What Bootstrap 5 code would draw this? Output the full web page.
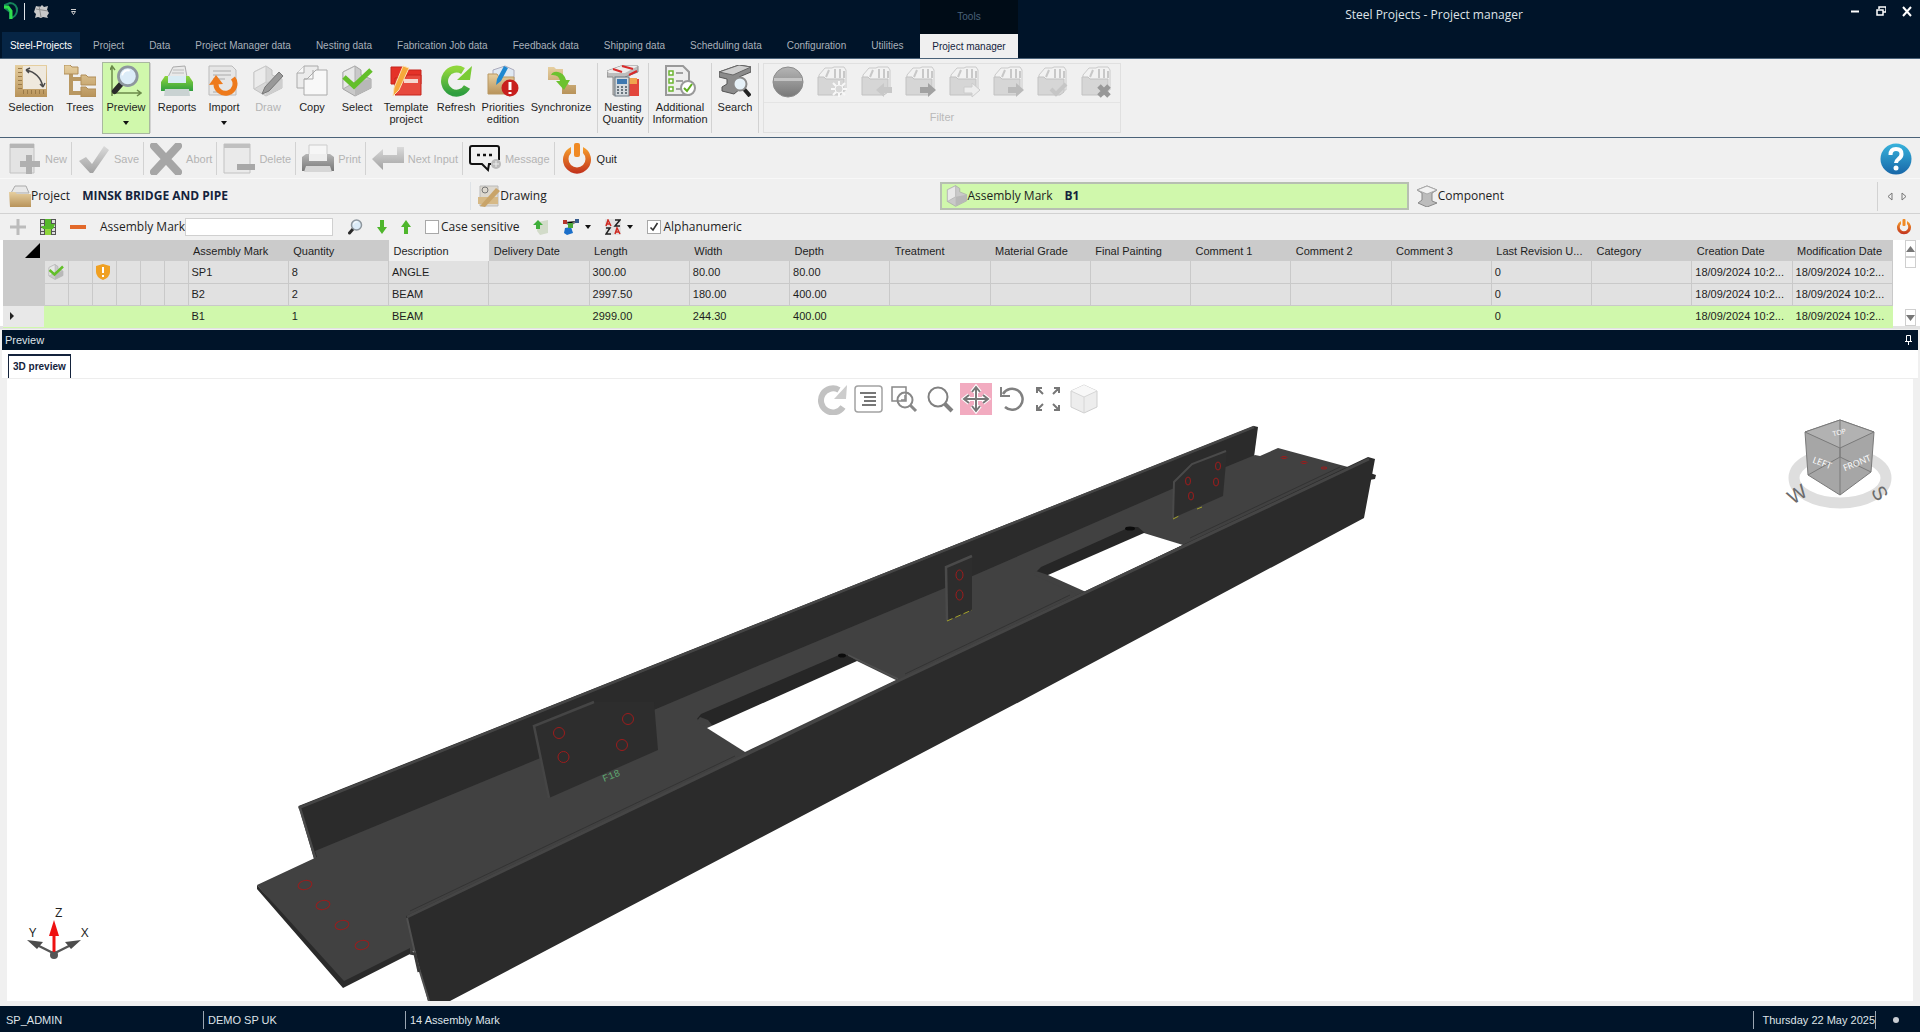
<!DOCTYPE html>
<html lang="en">
<head>
<meta charset="utf-8">
<meta name="viewport" content="width=device-width, initial-scale=1">
<title>Steel Projects - Project manager</title>
<link href="https://cdn.jsdelivr.net/npm/bootstrap@5.3.0/dist/css/bootstrap.min.css" rel="stylesheet">
<style>
:root{--navy:#001429;--panel:#f0f0f0;--green:#d0f8ac;--rule:#d2d2d2}
body{font-family:"Liberation Sans",Arial,sans-serif;font-size:11px;line-height:12px;color:#1e1e1e;background:var(--panel)}
button{font:inherit;color:inherit;background:none;border:0;padding:0}
svg{display:block;flex:none}
a{color:inherit;text-decoration:none}
.humanist{font-family:"Open Sans","Noto Sans",sans-serif;font-size:12px;line-height:16px}
.shell{min-height:100vh}
.i32{width:32px;height:32px}.i22{width:22px;height:22px}.i16{width:16px;height:16px}

.titlebar{background:var(--navy);color:#dfe3e8;height:59px;border-bottom:1px solid #4a6278}
.quick{width:920px;height:32px}
.tabset{height:26px;padding-left:2px;font-size:10px}
.tabset a{padding:0 12px;height:26px;line-height:28px;color:#a9b1ba;margin-right:1px;white-space:nowrap}
.tabset a.first-tab{background:#062545;color:#fff;padding:0;width:78px;text-align:center}
.context-group{background:#000c17;width:98px;height:58px;color:#4a627a;font-size:10px}
.context-group span{height:34px;line-height:34px}
.context-group a{background:var(--panel);color:#14233c;height:24px;line-height:26px}
.win-title{padding-top:7px}

.ribbon{height:79px;padding:4px 5px;border-bottom:1px solid #4a6278}
.ribbon button{height:70px;padding-top:2px;display:flex;flex-direction:column;align-items:center}
.ribbon button span{margin-top:4px}
.ribbon button svg.caret{margin-top:8px}
.w44{width:44px}.w46{width:46px}.w48{width:48px}.w50{width:50px}.w52{width:52px}.w60{width:60px}.w70{width:70px}
.ribbon button.active{background:var(--green);outline:1px solid #a9b8a0}
.vbar{width:1px;background:var(--rule);margin:0 1px}
.filter-group{width:358px;border:1px solid #e0e0e0;margin-left:3px;color:#b9b9b9}
.filter-group .fi{height:39px;border-bottom:1px solid #e4e4e4;padding:2px 8px}
button:disabled{color:#b4b4b4}

.tools{height:41px;padding:4px 8px 3px 3px;border-bottom:1px solid #f8f8f8}
.tools button{height:33px;padding:0 4px 0 6px;display:flex;align-items:center;gap:4px}
.tools button+button{border-left:1px solid var(--rule)}

.crumbs{height:35px;padding:3px 0 2px 2px;border-bottom:1px solid var(--rule)}
.crumb{flex:1 1 0;padding-left:7px;height:28px}
.crumb.active{background:var(--green);border:2px solid #b7bfb2;padding-left:4px}
.crumb strong{color:#14233c;margin-left:12px}
.crumb-nav{width:43px;padding-right:4px;border-left:1px solid var(--rule)}

.finder{height:26px;padding:0 8px 0 10px;gap:14px}
.finder input[type=text]{width:148px;height:18px;border:1px solid #d0d0d0;padding:0 3px}
.finder input[type=checkbox]{appearance:none;width:14px;height:14px;margin:0 2px 0 0;border:1px solid #a8a8a8;background:#fff}
.finder input[type=checkbox]:checked{background:#fff url("data:image/svg+xml,%3Csvg xmlns='http://www.w3.org/2000/svg' viewBox='0 0 12 12'%3E%3Cpath d='M2.500 6.500L5 9l4.500-7' fill='none' stroke='%23333' stroke-width='1.600'/%3E%3C/svg%3E")}
.finder label{display:flex;align-items:center}
.with-caret{display:flex;align-items:center;gap:6px}

.gridwrap{padding-left:3px;background:#fff;border-bottom:3px solid #e2e2e2;height:89px}
.grid-table{table-layout:fixed;width:100%;border-collapse:collapse}
.grid-table th{background:#cbcbcb;font-weight:400;height:21px;padding:0 0 0 5px;white-space:nowrap}
.grid-table th.lit{background:#f0f0f0}
.grid-table td{background:#e1e1e1;border-right:1px solid #c9c9c9;border-bottom:1px solid #c9c9c9;height:22px;padding:0 0 0 3px;white-space:nowrap}
.grid-table td.gutter{background:#cbcbcb;border-color:#cbcbcb}
.grid-table tr.picked td{background:var(--green);border-color:var(--green)}
.grid-table tr.picked td.gutter{background:#e8e8e8}
.c-gut{width:41px}.c-ico{width:24px}
.vscroll{width:17px;margin:0 4px 0 12px}
.vscroll button,.vscroll i{border:1px solid #cfcfcf;height:17px;display:flex;align-items:center;justify-content:center;background:#fff}
.vscroll i{height:11px}

.pane-title{background:var(--navy);color:#dfe3e8;height:20px;margin:1px 2px 0;padding:0 6px 0 3px}
.pane-tabs{height:29px;background:#fff;margin:0 2px;padding:4px 6px 0;border-bottom:1px solid #ededed}
.pane-tabs a{border:1px solid #14233c;border-bottom:0;border-top-width:2px;color:#14233c;font-weight:700;font-size:10px;line-height:22px;padding:0 4px}
.stage{background:#fff;margin:0 7px 5px;flex:1 1 auto;position:relative;overflow:hidden}
.scene{position:absolute;inset:0;width:100%;height:100%}
.viewbar{position:relative;padding:4px 4px 0 0;gap:4px}
.viewbar button.active{background:#f2abc0}
.status{background:var(--navy);color:#dfe3e8;height:26px;padding:2px 0 0 2px}
.status span{border-right:1px solid #9aa6b2;height:18px;line-height:18px;padding:0 4px}
.status .cell{width:202px}
</style>
</head>
<body>
<svg width="0" height="0" class="position-absolute" aria-hidden="true">
<defs>
<linearGradient id="gT" x2="0" y2="1"><stop offset="0" stop-color="#e6cfa0"/><stop offset="1" stop-color="#b8935a"/></linearGradient>
<linearGradient id="gG" x2="0" y2="1"><stop offset="0" stop-color="#8fd63c"/><stop offset="1" stop-color="#2f9e3f"/></linearGradient>
<linearGradient id="gO" x2="0" y2="1"><stop offset="0" stop-color="#f7a02c"/><stop offset="1" stop-color="#c1301c"/></linearGradient>
<linearGradient id="gS" x2="0" y2="1"><stop offset="0" stop-color="#dadada"/><stop offset="1" stop-color="#a2a2a2"/></linearGradient>
<linearGradient id="gD" x2="0" y2="1"><stop offset="0" stop-color="#b5b5b5"/><stop offset="1" stop-color="#787878"/></linearGradient>
<linearGradient id="gB" x2="0" y2="1"><stop offset="0" stop-color="#38b3dc"/><stop offset="1" stop-color="#1867a8"/></linearGradient>
<symbol id="power" viewBox="0 0 32 32"><path d="M10 4A14 14 0 1 0 22 4V10a8.500 8.500 0 1 1-12 0z" fill="url(#gO)"/><rect x="13" y="0" width="6" height="14" rx="2" fill="#f08a24"/></symbol>
<symbol id="caret" viewBox="0 0 6 4"><path d="M0 0h6L3 4z" fill="#111"/></symbol>
<symbol id="lens" viewBox="0 0 32 32"><path d="M12 20L5 28" stroke="#2a2a2a" stroke-width="6" stroke-linecap="round"/><circle cx="19" cy="12" r="10" fill="#dcecf8" stroke="#8e979e" stroke-width="3"/><path d="M13 11a6 6 0 0 1 8-5" fill="none" stroke="#fff" stroke-width="2"/></symbol>
<symbol id="files" viewBox="0 0 32 32"><path d="M3 9l6-7h7l2-1h10l2 3v20H9L3 26z" fill="#f2f2f2" stroke="#cacaca"/><path d="M13 4l-3 7M19 3v9M24 3v9M28 5v7" stroke="#c8c8c8" stroke-width="2"/><path d="M2 11h6l2 2h18v13l-4 3H2z" fill="#d6d6d6" stroke="#c2c2c2"/></symbol>
<symbol id="block" viewBox="0 0 32 32"><path d="M2 7L14 1l6 4v5l10 4v9L14 31 2 24z" fill="#c9c9c9" stroke="#a4a4a4"/><path d="M14 1v16L2 24V7z" fill="#e8e8e8" stroke="#b0b0b0"/><path d="M14 17l16-3v9L14 31z" fill="#b8b8b8"/></symbol>
</defs>
</svg>

<div class="shell d-flex flex-column">
<header class="titlebar d-flex align-items-start">
  <div class="d-flex flex-column">
    <div class="quick d-flex align-items-start">
      <svg width="80" height="26" viewBox="0 0 80 26"><path d="M5 8V5l5-2a7 7 0 0 1 7 8 8 8 0 0 1-7 7V12z" fill="none" stroke="#14835a" stroke-width="2"/><path d="M4 7h4l3 4v8" fill="none" stroke="#2fe04c" stroke-width="3"/><path d="M24.500 3v17" stroke="#dfe3e8"/><path d="M36 6l4 1 2-2 2 2 4-1-1 4 2 3-2 3 1 2-5-1-2 1-3-1-3 1 1-4-2-2 1-3z" fill="#c9c9c9"/><path d="M36 9l12 2M39 6l2 11" stroke="#8c8c8c"/><path d="M71 9.500h5" stroke="#ccc"/><path d="M71.500 11.500h4l-2 3z" fill="none" stroke="#ccc"/></svg>
    </div>
    <nav class="tabset d-flex" aria-label="Ribbon">
      <a class="first-tab" href="#">Steel-Projects</a><a href="#">Project</a><a href="#">Data</a><a href="#">Project Manager data</a><a href="#">Nesting data</a><a href="#">Fabrication Job data</a><a href="#">Feedback data</a><a href="#">Shipping data</a><a href="#">Scheduling data</a><a href="#">Configuration</a><a href="#">Utilities</a>
    </nav>
  </div>
  <div class="context-group d-flex flex-column text-center"><span>Tools</span><a href="#">Project manager</a></div>
  <div class="win-title humanist flex-fill text-center">Steel Projects - Project manager</div>
  <div class="d-flex gap-3 pt-1 pe-2">
    <button aria-label="Minimize"><svg width="10" height="14"><path d="M1 7.500h8" stroke="#fff" stroke-width="2"/></svg></button>
    <button aria-label="Restore"><svg width="10" height="14"><path d="M3 5V3h7v5H7.500M1 6h6v5H1z" fill="none" stroke="#fff" stroke-width="1.500"/></svg></button>
    <button aria-label="Close"><svg width="10" height="14"><path d="M1 3l8 9M9 3l-8 9" stroke="#fff" stroke-width="2"/></svg></button>
  </div>
</header>

<section class="ribbon d-flex" aria-label="Project manager commands">
  <button class="w52"><svg class="i32" viewBox="0 0 32 32"><path d="M0 0h32v32H0z" fill="url(#gT)"/><path d="M8 1h23v23H8z" fill="#efe9de"/><path d="M5 24V1M8 27h23" stroke="#9a7a48" stroke-dasharray="1 3" stroke-width="4"/><path d="M11 5q14 3 17 17M11 5l4-2M11 5l3 3M28 22l-3-3M28 22l2-4" fill="none" stroke="#4a4a4a" stroke-width="1.500"/></svg><span>Selection</span></button>
  <button class="w46"><svg class="i32" viewBox="0 0 32 32"><path d="M7 6v22h10M7 14h10" fill="none" stroke="#b99862" stroke-width="4"/><path d="M0 0h6l2 2h6v7H0zM17 10h5l2 2h8v8H17zM17 22h5l2 2h8v8H17z" fill="url(#gT)" stroke="#b08d58"/></svg><span>Trees</span></button>
  <button class="w46 active"><svg class="i32" viewBox="0 0 32 32"><path d="M2 31V2M0 5l2-4 3 4M2 28h28M27 25l4 3-4 3" fill="none" stroke="#6b8a4a" stroke-width="1.500"/><use href="#lens" width="30" height="30"/></svg><span>Preview</span><svg class="caret" width="6" height="4"><use href="#caret"/></svg></button>
  <div class="vbar"></div>
  <button class="w50"><svg class="i32" viewBox="0 0 32 32"><path d="M7 12L12 2l12-1 2 11z" fill="#e9e9e9" stroke="#aaa"/><path d="M12 5h11M11 8h12" stroke="#bbb"/><path d="M4 11h24l4 6v9H0v-9z" fill="url(#gG)"/><path d="M7 11h18v7H7z" fill="#d9ecf4"/><path d="M4 24h24l1 7H3z" fill="#c9d2d2"/></svg><span>Reports</span></button>
  <button class="w44"><svg class="i32" viewBox="0 0 32 32"><path d="M1 1h23l4 4v25H1z" fill="#e6e6e6" stroke="#bbb"/><path d="M5 6h18M5 10h18M5 14h12M5 27h18" stroke="#aaa"/><path d="M8 18a9.500 9.500 0 1 0 17-5" fill="none" stroke="#ee7a1c" stroke-width="5"/><path d="M1 20L8 10l7 9z" fill="#ee7a1c"/></svg><span>Import</span><svg class="caret" width="6" height="4"><use href="#caret"/></svg></button>
  <button class="w44" disabled><svg class="i32" viewBox="0 0 32 32"><use href="#block" opacity=".6"/><path d="M10 29l3-7L27 7l4 4-14 15z" fill="#999" stroke="#777"/></svg><span>Draw</span></button>
  <button class="w44"><svg class="i32" viewBox="0 0 32 32"><path d="M8 1h14v22H1V8z" fill="#ececec" stroke="#aaa"/><path d="M8 1v7H1M20 5h11v25H8V14h3z" fill="#f8f8f8" stroke="#aaa"/><path d="M17 5v9H8" fill="none" stroke="#aaa"/></svg><span>Copy</span></button>
  <button class="w46"><svg class="i32" viewBox="0 0 32 32"><use href="#block"/><path d="M3 12l10 9L30 5" fill="none" stroke="#63bf2a" stroke-width="5"/></svg><span>Select</span></button>
  <button class="w52"><svg class="i32" viewBox="0 0 32 32"><path d="M1 2h12l3 3h15v14H1z" fill="#e53228" stroke="#c5241c"/><path d="M5 13h10l2-3h14v20H5z" fill="#e74a3e" stroke="#c5241c"/><path d="M14 14h14v4H14z" fill="#f5d8d0"/><path d="M3 31l1-8L13 1l6 2-10 22z" fill="#f6a93b" stroke="#fbe0b0"/></svg><span>Template<br>project</span></button>
  <button class="w48"><svg class="i32" viewBox="0 0 32 32"><path d="M27 22A12 12 0 1 1 23 6" fill="none" stroke="url(#gG)" stroke-width="7"/><path d="M32 1l-2 14H17z" fill="#7acb35"/></svg><span>Refresh</span></button>
  <button class="w46"><svg class="i32" viewBox="0 0 32 32"><path d="M6 5l12-4 9 4v10H6z" fill="#dfe8f2" stroke="#aab"/><path d="M1 9h9l2 3h15v17H1z" fill="url(#gT)" stroke="#b99862"/><path d="M9 20l1-6L17 1l4 2-7 13z" fill="#1e88d0"/><circle cx="23" cy="23" r="8.500" fill="#c8201e"/><path d="M23 17v8M23 27v2" stroke="#fff" stroke-width="3"/></svg><span>Priorities<br>edition</span></button>
  <button class="w70"><svg class="i32" viewBox="0 0 32 32"><path d="M3 2h6l2 2h7v11H3zM17 18h5l2 2h7v9H17z" fill="url(#gT)"/><path d="M6 10q2-4 7-3 6 1 8 8h4l-6 10-8-9h4q-1-7-9-6z" fill="#6cc22f"/></svg><span>Synchronize</span></button>
  <div class="vbar"></div>
  <button class="w48"><svg class="i32" viewBox="0 0 32 32"><path d="M0 6l14-5h17v6L18 12v18H6V12H0z" fill="#bdbdbd" stroke="#888"/><path d="M0 6l14-5h17L18 8H2z" fill="#ececec"/><path d="M6 4l9 3M15 1l11 3M22 10l8-4" stroke="#d92a2a" stroke-width="2"/><path d="M20 14h12v17H20z" fill="#e2463c"/><path d="M22 13h8v6h-8z" fill="#f0a54e"/><rect x="8" y="12" width="14" height="19" fill="#d5dade" stroke="#6b7780"/><path d="M10 14h10v5H10z" fill="#3e78b0"/><path d="M10 22h10M10 25h10M10 28h10" stroke="#69757e" stroke-dasharray="2 2" stroke-width="2"/></svg><span>Nesting<br>Quantity</span></button>
  <div class="vbar"></div>
  <button class="w60"><svg class="i32" viewBox="0 0 32 32"><path d="M2 1h17l6 6v23H2z" fill="#eee" stroke="#999" stroke-width="2"/><path d="M5 6h4v4H5zM5 14h4v4H5zM5 22h4v4H5z" fill="#fff" stroke="#6cb532" stroke-width="1.500"/><path d="M12 8h7M12 16h7M12 24h5" stroke="#888" stroke-width="1.500"/><circle cx="24" cy="23" r="7" fill="#fff" stroke="#999" stroke-width="2"/><path d="M20 23l3 3 5-7" fill="none" stroke="#5fae1e" stroke-width="2"/></svg><span>Additional<br>Information</span></button>
  <div class="vbar"></div>
  <button class="w44"><svg class="i32" viewBox="0 0 32 32"><path d="M0 7L20 0l12 2v5L20 12l1 12-6 5-12-3v-4l5-3V14L0 12z" fill="#8b8b8b" stroke="#555"/><path d="M0 7L20 0l12 2-18 8z" fill="#cfcfcf" stroke="#666"/><path d="M25 24l6 7" stroke="#222" stroke-width="4"/><circle cx="21" cy="19" r="6.500" fill="#e6f1f8" stroke="#8b8b8b" stroke-width="2"/></svg><span>Search</span></button>
  <div class="vbar"></div>
  <div class="filter-group">
    <div class="fi d-flex justify-content-between">
      <svg class="i32" viewBox="0 0 32 32"><circle cx="16" cy="16" r="15" fill="url(#gD)" stroke="#8c8c8c"/><path d="M2 12h28v3H2z" fill="#c4c4c4"/></svg>
      <svg class="i32" viewBox="0 0 32 32"><use href="#files"/><path d="M23 15v16M15 23h16M17 17l12 12M29 17L17 29" stroke="#f8f8f8" stroke-width="2"/><circle cx="23" cy="23" r="4" fill="#d8d8d8" stroke="#f8f8f8"/></svg>
      <svg class="i32" viewBox="0 0 32 32"><use href="#files"/><path d="M16 24l8-7v4h8v6h-8v4z" fill="#c8c8c8"/></svg>
      <svg class="i32" viewBox="0 0 32 32"><use href="#files"/><path d="M32 24l-8-7v4h-8v6h8v4z" fill="#a2a2a2"/></svg>
      <svg class="i32" viewBox="0 0 32 32"><use href="#files"/><path d="M32 24l-8-7v4h-8v6h8v4z" fill="#ededed" stroke="#ccc"/></svg>
      <svg class="i32" viewBox="0 0 32 32"><use href="#files"/><path d="M32 24l-8-7v4h-8v6h8v4z" fill="#bababa"/></svg>
      <svg class="i32" viewBox="0 0 32 32"><use href="#files"/><path d="M15 23l5 5 10-10" fill="none" stroke="#c6c6c6" stroke-width="4"/></svg>
      <svg class="i32" viewBox="0 0 32 32"><use href="#files"/><path d="M19 20l10 10M29 20L19 30" stroke="#989898" stroke-width="5"/></svg>
    </div>
    <div class="text-center pt-2">Filter</div>
  </div>
</section>

<section class="tools d-flex align-items-center" aria-label="Record commands">
  <button disabled><svg class="i32" viewBox="0 0 32 32"><path d="M1 1h24v29H1z" fill="#e3e3e3" stroke="#c2c2c2"/><path d="M1 1h24v4H1z" fill="#b5b5b5"/><path d="M20 12v19M11 21h20" stroke="#b0b0b0" stroke-width="6"/></svg>New</button>
  <button disabled><svg class="i32" viewBox="0 0 32 32"><path d="M1 18l7-4 6 7L26 3l5 4-16 23h-3z" fill="url(#gS)"/></svg>Save</button>
  <button disabled><svg class="i32" viewBox="0 0 32 32"><path d="M4 3l24 26M28 3L4 29" stroke="#a6a6a6" stroke-width="8" stroke-linecap="round"/></svg>Abort</button>
  <button disabled><svg class="i32" viewBox="0 0 32 32"><path d="M1 1h26v29H1z" fill="#eaeaea" stroke="#c2c2c2"/><path d="M1 1h26v4H1z" fill="#c0c0c0"/><path d="M14 24h18" stroke="#a8a8a8" stroke-width="6"/></svg>Delete</button>
  <button disabled><svg class="i32" viewBox="0 0 32 32"><path d="M7 12V2h18v10z" fill="#f6f6f6" stroke="#ccc"/><path d="M0 14l4-3h24l4 3v14H0z" fill="url(#gD)"/><path d="M7 11h18v7H7z" fill="#eee"/><path d="M4 23h24l2 6H2z" fill="#d6d6d6"/></svg>Print</button>
  <button disabled><svg class="i32" viewBox="0 0 32 32"><path d="M0 16L11 6v6h14V4h7v16H11v7z" fill="url(#gS)"/></svg>Next Input</button>
  <button disabled><svg class="i32" viewBox="0 0 32 32"><path d="M3 3h25q2 0 2 2v12M22 21h-2l-1 6-6-6H3q-2 0-2-2V5q0-2 2-2" fill="none" stroke="#111" stroke-width="2"/><path d="M8 12h3M14 12h3M20 12h3" stroke="#111" stroke-width="2.500"/><circle cx="27" cy="21" r="5" fill="#bbb"/><path d="M27 18v6M24 21h6" stroke="#eee"/></svg>Message</button>
  <button><svg class="i32" viewBox="0 0 32 32"><use href="#power"/></svg>Quit</button>
  <button class="ms-auto border-0 p-0" aria-label="Help"><svg class="i32" viewBox="0 0 32 32"><circle cx="16" cy="16" r="15.500" fill="url(#gB)"/><path d="M10.500 12q0-6 5.500-6t5.500 5q0 3-3 5-2.500 2-2.500 4" fill="none" stroke="#fff" stroke-width="4"/><circle cx="16" cy="25" r="2.500" fill="#fff"/></svg></button>
</section>

<nav class="crumbs humanist d-flex" aria-label="Levels">
  <a class="crumb d-flex align-items-center" href="#"><svg class="i22" viewBox="0 0 22 22"><path d="M2 8L6 1h11l3 7z" fill="#e8e8e8" stroke="#aaa"/><path d="M0 7h6l2 2h14v13H1z" fill="url(#gT)"/></svg>Project<strong>MINSK BRIDGE AND PIPE</strong></a>
  <a class="crumb d-flex align-items-center border-start" href="#"><svg class="i22" viewBox="0 0 22 22"><path d="M2 1h18v20H2z" fill="#ddd8cf" stroke="#bbb"/><circle cx="7" cy="5" r="3" fill="none" stroke="#777"/><path d="M0 12h20v7H0z" fill="#d6b987"/><path d="M2 21L18 3l4 3L7 22z" fill="#c9a469"/></svg>Drawing</a>
  <a class="crumb active d-flex align-items-center" href="#" aria-current="page"><svg class="i22" viewBox="0 0 32 32"><use href="#block"/></svg>Assembly Mark<strong>B1</strong></a>
  <a class="crumb d-flex align-items-center" href="#"><svg class="i22" viewBox="0 0 22 22"><path d="M1 5l10-4 10 4-5 3v8l5 2-10 4L2 18l4-3V8z" fill="#bcbcbc" stroke="#888"/><path d="M1 5l10-4 10 4-10 4z" fill="#f2f2f2" stroke="#aaa"/></svg>Component</a>
  <div class="crumb-nav d-flex align-items-center justify-content-evenly">
    <button aria-label="Previous level"><svg width="6" height="9"><path d="M5 1v7L1 4.500z" fill="none" stroke="#777"/></svg></button>
    <button aria-label="Next level"><svg width="6" height="9"><path d="M1 1v7l4-3.500z" fill="none" stroke="#777"/></svg></button>
  </div>
</nav>

<form class="finder humanist d-flex align-items-center" onsubmit="return false">
  <button type="button" aria-label="Add"><svg class="i16" viewBox="0 0 16 16"><path d="M8 0v16M0 8h16" stroke="#bcbcbc" stroke-width="3"/></svg></button>
  <button type="button" aria-label="Columns"><svg class="i16" viewBox="0 0 16 16"><path d="M0 0h16v16H0z" fill="#555"/><path d="M1 1h3v3H1zM1 5h3v3H1zM1 9h3v3H1zM12 1h3v3h-3zM12 5h3v3h-3zM12 9h3v3h-3zM1 13h3v2H1zM12 13h3v2h-3z" fill="#ddd"/><path d="M5 0h6v5h4l-2 5H3L1 7h4z" fill="#55b82a"/><path d="M5 10h6v6H5z" fill="#8fd63c"/></svg></button>
  <button type="button" aria-label="Remove"><svg class="i16" viewBox="0 0 16 16"><path d="M0 6h16v4H0z" fill="#e2692a"/></svg></button>
  <div class="d-flex align-items-center"><label for="mark">Assembly Mark</label><input id="mark" type="text"></div>
  <button type="button" aria-label="Find"><svg class="i16" viewBox="0 0 32 32"><use href="#lens"/></svg></button>
  <button type="button" aria-label="Find next"><svg width="10" height="16" viewBox="0 0 10 16"><path d="M3 1h4v7h3l-5 7-5-7h3z" fill="#4fb62c"/></svg></button>
  <button type="button" aria-label="Find previous"><svg width="10" height="16" viewBox="0 0 10 16"><path d="M3 15h4V8h3L5 1 0 8h3z" fill="#4fb62c"/></svg></button>
  <label><input type="checkbox">Case sensitive</label>
  <button type="button" aria-label="Export"><svg class="i16" viewBox="0 0 16 16"><path d="M5 3l10-2v13l-8 2-3-4z" fill="#d2dbc9"/><path d="M3 10V6H0l5-5 5 5H7v4z" fill="#3fae3a"/></svg></button>
  <button type="button" aria-label="Relations" class="with-caret"><svg class="i16" viewBox="0 0 16 16"><path d="M2 3l5 3 7-4M7 6v6" stroke="#777" stroke-width="2"/><path d="M0 1h4v4H0z" fill="#b5352b"/><path d="M2 9l6-1 2 6-6 2-3-2z" fill="#1b6fc9"/><path d="M5 4h5v5H5z" fill="#49a83a"/><path d="M12 0h4v4h-4z" fill="#365a8c"/></svg><svg width="6" height="4"><use href="#caret"/></svg></button>
  <button type="button" aria-label="Sort" class="with-caret"><svg class="i16" viewBox="0 0 16 16"><path d="M0 0h16v16H0z" fill="#e2e2e2"/><path d="M1 7l2-6 3 6M2 5h3M10 15l2-6 3 6M11 13h3" fill="none" stroke="#cf2a22" stroke-width="1.500"/><path d="M10 1h5l-5 6h5M1 9h4l-4 6h5" fill="none" stroke="#222" stroke-width="1.500"/></svg><svg width="6" height="4"><use href="#caret"/></svg></button>
  <label><input type="checkbox" checked>Alphanumeric</label>
  <button type="button" aria-label="Close list" class="ms-auto"><svg class="i16" viewBox="0 0 32 32"><use href="#power"/></svg></button>
</form>

<div class="gridwrap d-flex">
  <div class="flex-fill">
  <table class="grid-table">
    <colgroup><col class="c-gut"><col class="c-ico"><col class="c-ico"><col class="c-ico"><col class="c-ico"><col class="c-ico"><col class="c-ico"><col span="17"></colgroup>
    <thead><tr><th class="gutter"><svg class="ms-auto me-1" width="15" height="15"><path d="M15 0v15H0z"/></svg></th><th colspan="6"></th><th>Assembly Mark</th><th>Quantity</th><th class="lit">Description</th><th>Delivery Date</th><th>Length</th><th>Width</th><th>Depth</th><th>Treatment</th><th>Material Grade</th><th>Final Painting</th><th>Comment 1</th><th>Comment 2</th><th>Comment 3</th><th>Last Revision U...</th><th>Category</th><th>Creation Date</th><th>Modification Date</th></tr></thead>
    <tbody>
    <tr><td class="gutter"></td><td><svg class="i16" viewBox="0 0 32 32"><use href="#block"/><path d="M3 12l10 9L30 5" fill="none" stroke="#63bf2a" stroke-width="5"/></svg></td><td></td><td><svg width="14" height="16"><path d="M7 0l7 2v6q0 5-7 8-7-3-7-8V2z" fill="#f0a022"/><path d="M7 3v6M7 11v2" stroke="#fff" stroke-width="2"/></svg></td><td></td><td></td><td></td><td>SP1</td><td>8</td><td>ANGLE</td><td></td><td>300.00</td><td>80.00</td><td>80.00</td><td></td><td></td><td></td><td></td><td></td><td></td><td>0</td><td></td><td>18/09/2024 10:2...</td><td>18/09/2024 10:2...</td></tr>
    <tr><td class="gutter"></td><td></td><td></td><td></td><td></td><td></td><td></td><td>B2</td><td>2</td><td>BEAM</td><td></td><td>2997.50</td><td>180.00</td><td>400.00</td><td></td><td></td><td></td><td></td><td></td><td></td><td>0</td><td></td><td>18/09/2024 10:2...</td><td>18/09/2024 10:2...</td></tr>
    <tr class="picked"><td class="gutter"><svg class="ms-1" width="4" height="8"><path d="M0 0l4 4-4 4z" fill="#222"/></svg></td><td></td><td></td><td></td><td></td><td></td><td></td><td>B1</td><td>1</td><td>BEAM</td><td></td><td>2999.00</td><td>244.30</td><td>400.00</td><td></td><td></td><td></td><td></td><td></td><td></td><td>0</td><td></td><td>18/09/2024 10:2...</td><td>18/09/2024 10:2...</td></tr>
    </tbody>
  </table>
  </div>
  <div class="vscroll d-flex flex-column">
    <button aria-label="Scroll up"><svg width="9" height="6"><path d="M0 6h9L4.500 0z" fill="#777"/></svg></button>
    <i></i>
    <button class="mt-auto" aria-label="Scroll down"><svg width="9" height="6"><path d="M0 0h9L4.500 6z" fill="#777"/></svg></button>
  </div>
</div>

<div class="pane-title d-flex align-items-center justify-content-between"><span>Preview</span>
  <button aria-label="Pin"><svg width="7" height="10"><path d="M1.500 6V.500h4V6M0 6.500h7M3.500 6v4" fill="none" stroke="#fff"/></svg></button></div>
<div class="pane-tabs d-flex"><a href="#">3D preview</a></div>

<main class="stage">
  <svg class="scene" viewBox="7 379 1906 622" preserveAspectRatio="xMidYMid meet" role="img" aria-label="Beam B1">
    <path d="M298.500 806L1254 426l4 1-4 30-14 50-924 353-2 -1z" fill="#2b2b2b"/>
    <path d="M298.500 808L1254 427" stroke="#454545" stroke-width="2.500"/>
    <path d="M300 808l15.500 51" stroke="#4a4a4a" stroke-width="2.500"/>
    <path d="M257 885l60-28-2-6 223-92 222-94 185-77 227-99 83-34 5 1 18-8 70 19 12 10-10 40L410 953l-66 33z" fill="#414141"/>
    <path d="M257 885v4l86 99 67-34v-6l-66 33z" fill="#2a2a2a"/>
    <path d="M1370 473l6 2-1 4-6 1z" fill="#2b2b2b"/>
    <path d="M697 719l4-5 138-59 9 0 9 6 38 19-149 72z" fill="#262626"/>
    <path d="M697 721l10 7 38 24h8L712 725l-4-5-8-3z" fill="#414141"/>
    <path d="M707 728l150-67 39 19-151 72z" fill="#fff"/>
    <path d="M848 655l50 24" stroke="#505050" stroke-width="1.500"/><ellipse cx="842" cy="655.500" rx="4" ry="2" fill="#0c0c0c"/>
    <path d="M1036 572l5-5 89-40h8l7 6 36 12-95 47z" fill="#262626"/>
    <path d="M1036 571l12 4 38 17-8 3-44-20z" fill="#414141"/>
    <path d="M1048 575l96-42 39 12-97 47z" fill="#fff"/>
    <ellipse cx="1130" cy="528.500" rx="5" ry="2" fill="#0c0c0c"/>
    <path d="M406 916L760 747l138-67 470-223 7 2-11 59L1023 700 760 838 450 1001h-22z" fill="#2b2b2b"/>
    <path d="M407 917L760 748l138-67 471-222" fill="none" stroke="#454545" stroke-width="3"/>
    <path d="M410 911L735 756M905 674l165-79M1190 538l150-71" stroke="#333"/>
    <path d="M407 918l10 44 12 39" fill="none" stroke="#505050" stroke-width="2"/>
    <path d="M410 953l5 1 4 18" fill="none" stroke="#3a3a3a" stroke-width="3"/>
    <path d="M534 726l60-24 60 0 4 48-109 48z" fill="#2d2d2d"/><path d="M594 702l-60 24 15 72" fill="none" stroke="#454545" stroke-width="2.500"/>
    <path d="M945 566l27-10v54l-25 11z" fill="#2d2d2d"/><path d="M972 556l-26 11 1 54" fill="none" stroke="#4a4a4a" stroke-width="2.500"/>
    <path d="M1174 482l18-18 35-13-4 45-50 22z" fill="#2d2d2d"/><path d="M1226 451l-34 13-18 18-1 36" fill="none" stroke="#4a4a4a" stroke-width="2"/>
    <g fill="none" stroke="#9c1c1c"><ellipse cx="305" cy="885" rx="7" ry="4.500" transform="rotate(-14 305 885)"/><ellipse cx="323" cy="905" rx="7" ry="4.500" transform="rotate(-14 323 905)"/><ellipse cx="342" cy="925" rx="7" ry="4.500" transform="rotate(-14 342 925)"/><ellipse cx="362" cy="945" rx="7" ry="4.500" transform="rotate(-14 362 945)"/>
    <circle cx="559" cy="733" r="5.500"/><circle cx="563.500" cy="757" r="5.500"/><circle cx="628" cy="719" r="5.500"/><circle cx="622" cy="745" r="5.500"/>
    <ellipse cx="959.500" cy="575" rx="3.500" ry="5"/><ellipse cx="959.500" cy="595" rx="3.500" ry="5"/>
    <ellipse cx="1188" cy="481" rx="2.500" ry="4"/><ellipse cx="1191" cy="496" rx="2.500" ry="4"/><ellipse cx="1218" cy="466" rx="2.500" ry="4"/><ellipse cx="1216" cy="482" rx="2.500" ry="4"/>
    <ellipse cx="1284" cy="457.500" rx="3" ry="1"/><ellipse cx="1304" cy="462.500" rx="3" ry="1"/><ellipse cx="1324" cy="468" rx="3" ry="1"/></g>
    <path d="M947 621l25-11M1173 519l6-3M1197 509l5-2" stroke="#a5a32a" stroke-dasharray="6 3"/>
    <text x="604" y="782" transform="rotate(-22 604 782)" font-family="Liberation Mono,monospace" font-size="10" fill="#5fa870">F18</text>
    <g><circle cx="54" cy="955" r="4" fill="#555"/><path d="M54 952v-25" stroke="#e11" stroke-width="3"/><path d="M54 920l5 16H49z" fill="#e11"/><path d="M53 953l-16-8M55 953l16-8" stroke="#555" stroke-width="2.500"/><path d="M27 940l16 2-6 7zM81 940l-16 2 6 7z" fill="#4c4c4c"/>
    <g font-family="Open Sans,sans-serif" font-size="13" fill="#222"><text x="55" y="917">Z</text><text x="29" y="937">Y</text><text x="81" y="937">X</text></g></g>
    <g><ellipse cx="1840" cy="478" rx="46" ry="25" fill="none" stroke="#dedede" stroke-width="11"/>
    <path d="M1840 420l34 12-3 40-31 23-32-20-3-43z" fill="#a6a6a6" stroke="#7a7a7a"/><path d="M1805 432l35-12 34 12-34 16z" fill="#b2b2b2" stroke="#7a7a7a"/><path d="M1840 448v47M1840 420v37M1808 475l32-18 31 15" fill="none" stroke="#7a7a7a"/>
    <g font-family="Open Sans,sans-serif" fill="#fff" font-size="9" text-anchor="middle"><text x="1822" y="466" transform="rotate(20 1822 463)">LEFT</text><text x="1857" y="466" transform="rotate(-22 1857 463)">FRONT</text><text x="1839" y="435" font-size="7" transform="rotate(-14 1839 432)">TOP</text></g>
    <g font-family="Liberation Sans,sans-serif" fill="#6b6b6b" font-size="20" text-anchor="middle"><text x="1797" y="501" transform="rotate(-32 1797 494)">W</text><text x="1880" y="500" transform="rotate(60 1880 493)">S</text></g></g>
  </svg>
  <div class="viewbar d-flex justify-content-center" role="toolbar" aria-label="View">
    <button aria-label="Reload"><svg class="i32" viewBox="0 0 32 32"><path d="M27 24A12 12 0 1 1 23 7" fill="none" stroke="#c2c2c2" stroke-width="6"/><path d="M31 2l-1 14H18z" fill="#ccc"/></svg></button>
    <button aria-label="Tree"><svg class="i32" viewBox="0 0 32 32"><rect x="3" y="3" width="27" height="26" rx="3" fill="none" stroke="#a2a2a2" stroke-width="1.500"/><path d="M8 10h16M12 14h12M12 18h12M10 22h14" stroke="#777" stroke-width="2"/></svg></button>
    <button aria-label="Zoom window"><svg class="i32" viewBox="0 0 32 32"><path d="M4 4h14v14H4z" fill="none" stroke="#888" stroke-width="1.500"/><circle cx="17" cy="17" r="7.500" fill="none" stroke="#888" stroke-width="2"/><path d="M13 17h4v-5" fill="none" stroke="#888" stroke-width="1.500"/><path d="M22 22l6 6" stroke="#888" stroke-width="3"/></svg></button>
    <button aria-label="Zoom"><svg class="i32" viewBox="0 0 32 32"><circle cx="14" cy="14" r="9.500" fill="none" stroke="#808080" stroke-width="2"/><path d="M21 21l7 7" stroke="#808080" stroke-width="4"/></svg></button>
    <button aria-label="Pan" class="active"><svg class="i32" viewBox="0 0 32 32"><path d="M16 5v22M5 16h22M12 9l4-5 4 5M12 23l4 5 4-5M9 12l-5 4 5 4M23 12l5 4-5 4" fill="none" stroke="#fff" stroke-width="4"/><path d="M16 5v22M5 16h22M12 9l4-5 4 5M12 23l4 5 4-5M9 12l-5 4 5 4M23 12l5 4-5 4" fill="none" stroke="#777" stroke-width="2"/></svg></button>
    <button aria-label="Rotate"><svg class="i32" viewBox="0 0 32 32"><path d="M7 11A10.500 10.500 0 1 1 9 24" fill="none" stroke="#808080" stroke-width="2.500"/><path d="M5 4v9h9" fill="none" stroke="#808080" stroke-width="2"/></svg></button>
    <button aria-label="Fit"><svg class="i32" viewBox="0 0 32 32"><path d="M11 11L5 5M5 10V5h5M21 11l6-6M22 5h5v5M11 21l-6 6M5 22v5h5M21 21l6 6M22 27h5v-5" fill="none" stroke="#777" stroke-width="2"/></svg></button>
    <button aria-label="Shading"><svg class="i32" viewBox="0 0 32 32"><path d="M16 2l13 6v16l-13 6-13-6V8z" fill="#ededed" stroke="#cfcfcf"/><path d="M3 8l13 6 13-6L16 2z" fill="#f8f8f8"/><path d="M3 8l13 6 13-6M16 14v16" fill="none" stroke="#d6d6d6"/></svg></button>
  </div>
</main>

<footer class="status d-flex align-items-center">
  <span class="cell">SP_ADMIN</span><span class="cell">DEMO SP UK</span><span class="border-0">14 Assembly Mark</span>
  <span class="ms-auto px-0"></span><span class="ps-2 pe-0">Thursday 22 May 2025</span>
  <svg width="44" height="18"><circle cx="20" cy="9" r="3" fill="#c9ced4"/></svg>
</footer>
</div>
<script src="https://cdn.jsdelivr.net/npm/bootstrap@5.3.0/dist/js/bootstrap.bundle.min.js"></script>
</body>
</html>
